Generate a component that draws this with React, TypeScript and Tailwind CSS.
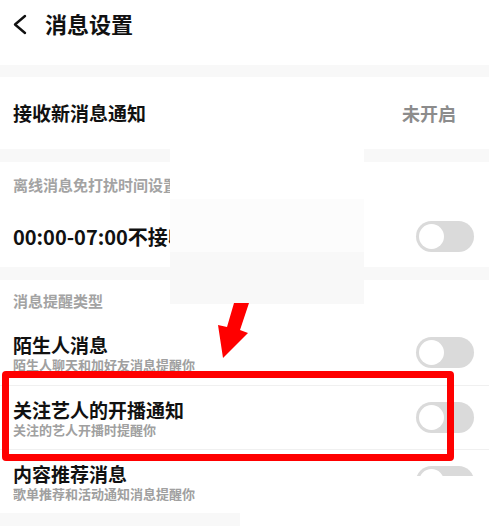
import React from 'react';

const font = { fontFamily: '"Noto Sans CJK SC", "Noto Sans", sans-serif' };

function Toggle() {
  return (
    <div className="w-[58px] h-[31px] rounded-full bg-[#dadada] flex items-center pl-[3px] shrink-0">
      <div className="w-[25px] h-[25px] rounded-full bg-white" />
    </div>
  );
}

function Band() {
  return <div className="h-[13px] bg-[#f8f8f8]" />;
}

function SwitchRow({ title, sub, h, divider, big }: { title: string; sub?: string; h: string; divider?: boolean; big?: boolean }) {
  return (
    <div className={`${h} flex items-center justify-between pl-[13px] pr-[15px] ${divider ? 'border-b border-[#f0f0f0]' : ''}`}>
      <div className="flex flex-col">
        <span className={`${big ? 'text-[20px]' : 'text-[19px]'} leading-[21px] font-bold text-[#111]`}>{title}</span>
        {sub && <span className="text-[13px] leading-[14px] mt-[3px] font-bold text-[#a0a0a0]">{sub}</span>}
      </div>
      <Toggle />
    </div>
  );
}

export default function App() {
  return (
    <div className="relative w-[489px] h-[527px] overflow-hidden bg-white" style={font}>
      {/* header */}
      <div className="h-[65px] flex items-start pl-[12px] pt-[8px]">
        <svg width="16" height="22" viewBox="0 0 16 22" className="mt-[6px]">
          <polyline points="13,2 3,10.5 13,19" fill="none" stroke="#111" strokeWidth="2.4" strokeLinecap="round" strokeLinejoin="round" />
        </svg>
        <span className="ml-[17px] text-[22px] leading-[30px] font-bold text-[#111]">消息设置</span>
      </div>
      <div className="h-[12px] bg-[#f8f8f8]" />

      <div className="h-[72px] flex items-center justify-between pl-[13px] pr-[33px]">
        <span className="text-[19px] font-bold text-[#111]">接收新消息通知</span>
        <span className="text-[18px] font-bold text-[#8c8c8c]">未开启</span>
      </div>
      <Band />

      <div className="h-[43px] flex items-center pl-[13px] pt-[4px]">
        <span className="text-[15px] font-bold text-[#a3a3a3]">离线消息免打扰时间设置</span>
      </div>
      <SwitchRow title="00:00-07:00不接收消息通知" h="h-[62px]" big />
      <Band />

      <div className="h-[40px] flex items-center pl-[13px] pt-[2px]">
        <span className="text-[15px] font-bold text-[#a3a3a3]">消息提醒类型</span>
      </div>
      <SwitchRow title="陌生人消息" sub="陌生人聊天和加好友消息提醒你" h="h-[66px]" divider />
      <SwitchRow title="关注艺人的开播通知" sub="关注的艺人开播时提醒你" h="h-[64px]" divider />
      <SwitchRow title="内容推荐消息" sub="歌单推荐和活动通知消息提醒你" h="h-[63px]" />
      <Band />

      {/* pasted cover patches */}
      <div className="absolute left-[170px] top-[145px] w-[194px] h-[159px] flex flex-col">
        <div className="h-[54px] bg-white" />
        <div className="h-[53px] bg-[#fcfcfc]" />
        <div className="h-[52px] bg-[#f8f8f8]" />
      </div>
      <div className="absolute left-[240px] top-[476px] w-[249px] h-[51px] bg-white" />

      {/* annotation arrow */}
      <svg className="absolute left-0 top-0" width="489" height="527" viewBox="0 0 489 527">
        <polygon points="234,303 249,303 240,330 248,333 223,358 218,325 227,327" fill="#ff0000" />
      </svg>

      {/* annotation box */}
      <div className="absolute left-[2px] top-[371px] w-[452px] h-[90px] border-[7px] border-[#ff0000] rounded-[4px]" />
    </div>
  );
}
